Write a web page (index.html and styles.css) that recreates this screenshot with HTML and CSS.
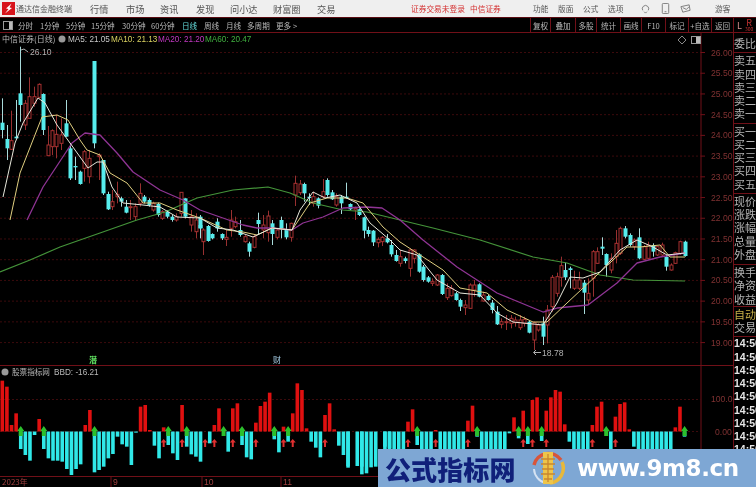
FILE: index.html
```html
<!DOCTYPE html>
<html lang="zh">
<head>
<meta charset="utf-8">
<title>通达信金融终端</title>
<link rel="stylesheet" href="styles.css">
</head>
<body>
<div class="app">
  <header class="titlebar">
    <svg class="app-logo" viewBox="0 0 13 13"><rect width="13" height="13" fill="#d8141c"/><path d="M9.5 1.5 L4 6.5 L6.5 7 L3 11.5 L10 6 L7.5 5.5 Z" fill="#fff"/></svg>
    <span class="app-name">通达信金融终端</span>
    <nav class="menu">
      <span>行情</span><span>市场</span><span>资讯</span><span>发现</span><span>问小达</span><span>财富圈</span><span>交易</span>
    </nav>
    <span class="login">证券交易未登录</span>
    <span class="broker">中信证券</span>
    <nav class="tools">
      <span>功能</span><span>版面</span><span>公式</span><span>选项</span>
    </nav>
    <div class="head-icons">
      <svg viewBox="0 0 12 12"><path d="M3 8 A3.5 3.5 0 1 1 9 8 M4.5 9.5 L6 11 L7.5 9.5" fill="none" stroke="#777"/></svg>
      <svg viewBox="0 0 12 12"><rect x="2.5" y="0.5" width="7" height="11" rx="1" fill="none" stroke="#777"/><path d="M5 9.5 H7" stroke="#777"/></svg>
      <svg viewBox="0 0 12 12"><path d="M1 4 L10 2 L11 8 L3 10 Z M3 5 L7 7 L10 4" fill="none" stroke="#777"/></svg>
    </div>
    <span class="guest">游客</span>
  </header>
  <div class="toolbar">
    <div class="periods">
      <svg class="panel-icon" viewBox="0 0 10 9"><rect x="0.5" y="0.5" width="9" height="8" fill="none" stroke="#999"/><rect x="6" y="1" width="3" height="7" fill="#bbb"/></svg>
      <span class="p w15">分时</span><span class="p w26">1分钟</span><span class="p w25">5分钟</span><span class="p w31">15分钟</span><span class="p w29">30分钟</span><span class="p w31">60分钟</span><span class="p w22 active">日线</span><span class="p w22">周线</span><span class="p w21">月线</span><span class="p w29">多周期</span><span class="p w22">更多 &gt;</span>
    </div>
    <div class="actions">
      <span class="btn w20">复权</span><span class="btn w25">叠加</span><span class="btn w21">多股</span><span class="btn w24">统计</span><span class="btn w21">画线</span><span class="btn w24">F10</span><span class="btn w23">标记</span><span class="btn w23">+自选</span><span class="btn w22">返回</span>
    </div>
    <div class="lr"><b>L</b><i>R<small>300</small></i></div>
  </div>
  <div class="main">
    <svg id="chart" class="chart" viewBox="0 33 733 454" width="733" height="454"></svg>
    <aside class="quote">
      <div class="group"><div>委比</div></div>
      <div class="group"><div>卖五</div><div>卖四</div><div>卖三</div><div>卖二</div><div>卖一</div></div>
      <div class="group"><div>买一</div><div>买二</div><div>买三</div><div>买四</div><div>买五</div></div>
      <div class="group wide"><div>现价</div><div>涨跌</div><div>涨幅</div><div>总量</div><div>外盘</div></div>
      <div class="group tight"><div>换手</div><div>净资</div><div>收益</div></div>
      <div class="group"><div class="auto">自动</div><div>交易</div></div>
      <div class="times"><div>14:50</div><div>14:50</div><div>14:50</div><div>14:50</div><div>14:50</div><div>14:50</div><div>14:50</div><div>14:50</div><div>14:50</div><div>14:50</div></div>
    </aside>
  </div>
  <div class="watermark">
    <span class="wm-name">公式指标网</span>
    <svg class="wm-logo" viewBox="0 0 38 38">
      <path d="M5 16 A15 15 0 0 1 32 11" fill="none" stroke="#d8553a" stroke-width="3.5"/>
      <path d="M33 13 A15 15 0 0 1 21 34" fill="none" stroke="#e8b83a" stroke-width="3.5"/>
      <path d="M17 34 A15 15 0 0 1 5 20" fill="none" stroke="#d5e2f2" stroke-width="2"/>
      <rect x="14" y="3" width="10" height="32" fill="#eec54a"/>
      <path d="M12 10 H26 M12 15 H26 M13 20 H25 M12 25 H26 M15 30 H23 M19 5 V33" stroke="#c9862f" stroke-width="1.3"/>
    </svg>
    <span class="wm-url">www.9m8.cn</span>
  </div>
</div>
<script src="chart.js"></script>
</body>
</html>
```
FILE: styles.css
```css
* { box-sizing: border-box; }
html, body { margin: 0; padding: 0; background: #000; }
.app {
  position: relative;
  width: 756px;
  height: 487px;
  overflow: hidden;
  display: flex;
  flex-direction: column;
  background: #000;
  font-family: "Noto Sans CJK SC", "Liberation Sans", sans-serif;
  filter: blur(0.3px);
}
.titlebar {
  height: 17px;
  flex: none;
  display: flex;
  align-items: center;
  background: #efefef;
  padding-left: 2px;
  color: #555;
  font-size: 9.2px;
}
.app-logo { width: 13px; height: 13px; flex: none; }
.app-name { margin-left: 1px; width: 57px; font-size: 8px; white-space: nowrap; }
.menu { display: flex; margin-left: 17px; width: 321px; }
.menu span:nth-child(1) { width: 36px; }
.menu span:nth-child(2) { width: 34px; }
.menu span:nth-child(3) { width: 36px; }
.menu span:nth-child(4) { width: 34px; }
.menu span:nth-child(5) { width: 43px; }
.menu span:nth-child(6) { width: 44px; }
.login { color: #d43030; width: 59px; white-space: nowrap; font-size: 7.7px; }
.broker { color: #d43030; width: 63px; white-space: nowrap; font-size: 7.7px; }
.tools { display: flex; width: 107px; font-size: 7.7px; }
.tools span { width: 25px; }
.head-icons { display: flex; gap: 9px; width: 75px; }
.head-icons svg { width: 11px; height: 11px; }
.guest { font-size: 7.7px; white-space: nowrap; }

.toolbar {
  height: 16px;
  flex: none;
  display: flex;
  align-items: stretch;
  background: #000;
  border-top: 1px solid #5a0c12;
  border-bottom: 1px solid #701018;
  color: #b8b8b8;
  font-size: 7.6px;
  white-space: nowrap;
}
.periods { display: flex; align-items: center; padding-left: 3px; width: 530px; }
.panel-icon { width: 10px; height: 9px; margin-right: 5px; flex: none; }
.p { display: block; flex: none; }
.active { color: #62d8d8; }
.w15 { width: 22px; }
.w26 { width: 26px; }
.w25 { width: 25px; }
.w31 { width: 31px; }
.w29 { width: 29px; }
.w22 { width: 22px; }
.w21 { width: 21px; }
.w20 { width: 20px; }
.w24 { width: 24px; }
.w23 { width: 23px; }
.actions { display: flex; width: 203px; }
.btn {
  display: flex;
  align-items: center;
  justify-content: center;
  border-left: 1px solid #701018;
  flex: none;
}
.lr {
  width: 23px;
  flex: none;
  display: flex;
  gap: 3px;
  padding-left: 3px;
  align-items: center;
  border-left: 1px solid #701018;
  color: #c03030;
  font-size: 9px;
}
.lr b { font-weight: normal; color: #d89090; }
.lr i { font-style: normal; display: flex; flex-direction: column; line-height: 6px; align-items: center; }
.lr small { font-size: 5px; line-height: 5px; }

.main { flex: 1; display: flex; min-height: 0; }
.chart { display: block; flex: none; background: #000; }
.quote {
  width: 23px;
  flex: none;
  overflow: hidden;
  color: #b4b4b4;
  font-size: 11px;
  line-height: 13.25px;
  white-space: nowrap;
  border-left: 1px solid #701018;
  padding-top: 3px;
}
.group { border-bottom: 1px solid #701018; padding: 1px 0 2px; }
.group.wide { padding-bottom: 3px; }
.group.tight { padding-bottom: 0; }
.auto { color: #c8b048; }
.times { color: #e6e6e6; font-family: "Liberation Sans", sans-serif; font-size: 10.5px; font-weight: bold; }

.watermark {
  position: absolute;
  right: 0;
  bottom: 0;
  width: 378px;
  height: 38px;
  background: #7ea7d4;
  display: flex;
  align-items: center;
  white-space: nowrap;
}
.wm-name { margin-left: 7px; width: 144px; color: #10207a; font-size: 26px; font-weight: 900; letter-spacing: 0.1px; flex: none; }
.wm-logo { width: 38px; height: 38px; flex: none; }
.wm-url { margin-left: 10px; color: #fff; font-family: "DejaVu Sans", sans-serif; font-weight: bold; font-size: 23px; letter-spacing: -0.4px; }

.ax { fill: #803232; font-family: "Liberation Sans", sans-serif; font-size: 8.6px; }
.lbl { font-family: "Liberation Sans", sans-serif; font-size: 8.2px; }
.date { font-family: "Liberation Sans", sans-serif; font-size: 8.6px; }
.cjk { font-family: "Noto Sans CJK SC", sans-serif; font-size: 8px; }
.cjk-small { font-family: "Noto Sans CJK SC", sans-serif; font-size: 7.6px; }
.mark { fill: #b0b0b0; font-family: "Liberation Sans", sans-serif; font-size: 8.6px; }
.flag-bold { font-weight: bold; }
```
FILE: chart.js
```js
(function () {
  var NS = 'http://www.w3.org/2000/svg';
  var svg = document.getElementById('chart');
  function el(name, attrs, text) {
    var e = document.createElementNS(NS, name);
    for (var k in attrs) e.setAttribute(k, attrs[k]);
    if (text != null) e.textContent = text;
    svg.appendChild(e);
    return e;
  }
  var RED = '#a83030', CY = '#56ecec', GRID = '#3c0a0c', LINE = '#701018';
  var STEP = 4.61, START = 2.3;
  function snap(x) { return START + STEP * Math.round((x - START) / STEP); }

  // grid + price axis
  var prices = ['26.00','25.50','25.00','24.50','24.00','23.50','23.00','22.50','22.00','21.50','21.00','20.50','20.00','19.50','19.00'];
  prices.forEach(function (p, i) {
    var y = 52.5 + i * 20.72;
    el('line', {x1: 0, x2: 701, y1: y, y2: y, stroke: GRID, 'stroke-dasharray': '2 2'});
    el('line', {x1: 701, x2: 705, y1: y, y2: y, stroke: LINE});
    el('text', {x: 711, y: y + 3, 'class': 'ax'}, p);
  });
  el('line', {x1: 701, x2: 701, y1: 33, y2: 487, stroke: LINE});
  el('line', {x1: 0, x2: 733, y1: 365.5, y2: 365.5, stroke: LINE});
  el('line', {x1: 0, x2: 701, y1: 476.5, y2: 476.5, stroke: LINE});
  el('line', {x1: 0, x2: 701, y1: 399.5, y2: 399.5, stroke: GRID, 'stroke-dasharray': '2 2'});
  el('line', {x1: 0, x2: 701, y1: 431.5, y2: 431.5, stroke: GRID, 'stroke-dasharray': '2 2'});
  el('text', {x: 711, y: 402, 'class': 'ax'}, '100.0');
  el('text', {x: 715, y: 435, 'class': 'ax'}, '0.00');

  // candles: [x, type(0 red,1 cyan), wickTop, bodyTop, bodyBottom, wickBottom] in zoom-crop units
  function candles(ox, oy, list) {
    list.forEach(function (c) {
      var x = Math.round(ox + c[0] / 3 - 0.5) + 0.5;
      var up = c[1] === 0;
      var wt = oy + c[2] / 3, bt = oy + c[3] / 3, bb = oy + c[4] / 3, wb = oy + c[5] / 3;
      el('line', {x1: x, x2: x, y1: wt, y2: wb, stroke: up ? '#983030' : '#a8dada'});
      var h = Math.max(bb - bt, 1);
      if (up) el('rect', {x: x - 1.5, y: bt, width: 3, height: h, fill: '#000', stroke: RED});
      else el('rect', {x: x - 2, y: bt, width: 4, height: h, fill: CY});
    });
  }
  candles(0, 40, [
    [7,1,175,248,270,295],[21,1,255,297,325,360],[35,0,212,302,328,330],[49,1,180,290,295,295],[62,1,20,160,195,245],
    [75,0,180,190,255,270],[89,0,112,170,235,235],[103,0,140,170,190,200],[117,0,130,133,172,175],[131,1,160,162,270,285],
    [145,0,258,315,347,347],[157,0,268,272,320,345],[170,0,225,283,320,355],[185,0,235,285,310,330],[198,1,180,250,290,290],
    [212,1,310,325,415,420],[226,1,350,378,382,420],[240,1,392,395,432,434],[253,0,330,335,385,425],[268,0,330,355,410,430],
    [282,1,63,63,310,325],[297,0,340,345,350,420],[310,1,360,360,460,465],[324,1,455,462,508,510],[338,0,450,485,500,510],
    [352,0,425,463,470,490],[365,1,470,475,485,500],[378,1,480,500,518,520],[392,0,480,500,503,540],[406,0,490,500,530,540],
    [420,0,430,460,490,500],[433,1,465,470,485,490],[447,1,475,480,495,500],[461,0,485,490,510,515],[474,1,488,492,525,530],
    [488,0,510,515,535,540],[502,1,510,515,530,535],[516,1,525,530,540,545],[530,0,520,530,540,545],[543,0,457,457,520,530],[557,1,475,475,530,535]
  ]);
  candles(186, 160, [[15,0,150,170,195,215],[30,0,160,180,215,235],[42,1,180,195,205,235]]);
  candles(200, 160, [
    [0,1,165,170,205,215],[10,0,205,210,245,285],[24,1,195,198,243,245],[38,1,220,222,235,238],[52,1,175,185,205,215],[66,1,220,222,235,240],
    [80,0,210,232,238,258],[93,0,150,180,205,230],[107,0,170,185,200,205],[121,1,180,210,225,230],[135,0,225,230,245,248],
    [148,1,245,250,275,290],[162,0,222,230,262,265],[176,1,158,180,192,225],[190,0,165,195,210,235],[204,0,152,168,218,245],
    [218,1,180,190,222,255],[232,0,205,210,232,238],[245,1,170,180,205,235],[259,1,190,207,232,238],[273,0,188,190,232,245],
    [287,0,47,70,105,138],[300,0,60,72,98,105],[314,1,68,72,100,125],[328,1,100,110,114,135],[341,0,95,110,130,140],
    [355,1,112,115,137,145],[369,0,57,95,110,115],[383,1,55,60,105,110],[396,1,90,97,118,120],[410,0,100,110,135,140],
    [424,1,105,110,130,162],[438,1,68,110,114,115],[451,1,130,132,148,150],[465,0,140,145,150,180],[479,1,145,148,165,168],
    [492,1,170,172,212,235],[506,1,200,210,222,230],[520,1,210,212,247,258],[534,0,232,238,248,262],[548,0,228,232,245,258],
    [561,1,222,235,247,250],[575,1,240,255,283,290],[589,1,270,285,303,305]
  ]);
  candles(400, 200, [
    [0,0,150,170,190,200],[15,1,170,175,183,190],[30,0,145,150,205,230],[42,0,148,150,175,190],[57,1,160,163,215,218],
    [70,1,195,200,240,245],[84,1,228,232,245,248],[98,0,235,245,250,258],[112,0,222,225,255,258],[127,1,222,225,282,285],
    [141,0,250,265,293,300],[155,0,255,265,287,290],[168,1,276,280,300,302],[182,1,296,300,320,333],[196,0,300,315,323,345],
    [210,0,250,255,325,325],[223,0,240,255,270,290],[237,1,250,253,290,292],[251,0,275,285,303,305],[265,1,284,288,300,302],
    [278,1,300,308,330,340],[292,1,318,335,373,375],[305,0,355,365,373,385],[319,0,345,365,368,390],[333,0,345,355,370,385],
    [347,0,350,360,368,380],[360,0,345,360,383,390],[374,0,350,358,370,380],[388,1,362,365,398,400],[402,0,365,368,420,450],
    [416,0,370,375,390,395],[430,1,350,370,410,435],[443,0,315,330,375,430],[457,0,225,232,320,335],[471,0,218,230,280,290],
    [484,0,170,197,232,260],[497,1,188,210,232,240],[511,1,200,205,210,265],[524,0,212,240,265,270],[538,0,215,240,265,270],
    [552,1,240,248,278,342],[566,0,235,280,300,315],[580,0,150,155,235,290],[593,0,142,155,190,192],[606,1,112,140,146,165],
    [620,1,160,162,195,230],[634,0,160,175,210,220],[648,0,90,130,170,190],[662,0,80,85,160,165],[676,1,78,85,110,115],
    [690,1,100,105,135,140],[704,0,115,120,140,150],[718,1,85,112,175,178],[732,0,135,140,178,180],[745,0,125,135,175,178],
    [759,1,130,135,155,170],[773,0,138,140,165,168],[786,0,128,135,165,170],[800,1,165,170,200,212],[813,0,190,195,210,212],
    [827,0,155,158,190,192],[841,0,122,125,160,165],[855,1,122,125,168,170]
  ]);

  // moving averages, page coordinates
  function ma(pts, col, w) {
    el('polyline', {points: pts, fill: 'none', stroke: col, 'stroke-width': w, 'stroke-linejoin': 'round'});
  }
  ma('0,272 30,260 60,247 100,233 137,220 165,212 197,198 233,190 268,187 290,193 313,203 343,210 367,212 400,220 433,228 480,240 533,257 567,263 600,275 633,280 685,281', '#44943a', 1.2);
  ma('27,220 43,187 72,143 85,133 100,135 117,153 133,172 160,190 183,200 200,210 220,217 243,225 257,228 272,228 292,230 303,223 323,217 343,208 367,207 382,208 400,220 423,240 457,267 497,293 543,312 557,308 588,305 617,283 637,263 660,257 685,253', '#8f3494', 1.3);
  ma('10,220 20,173 42,117 57,115 68,120 80,140 87,150 100,155 110,173 127,183 143,203 160,203 177,210 200,218 227,230 243,232 257,235 272,228 292,230 310,203 327,198 347,198 363,203 383,227 400,242 420,255 443,270 460,288 487,293 507,310 533,322 547,322 567,303 597,275 627,247 640,247 660,245 670,257 685,257', '#e0cf80', 1);
  ma('3,197 15,143 23,123 38,98 45,103 57,125 70,143 88,168 97,162 103,162 112,187 123,203 143,205 160,207 177,217 200,218 217,228 233,230 253,237 272,228 292,230 300,210 313,192 325,198 340,195 357,203 370,223 390,240 400,250 417,255 437,280 460,293 480,295 497,313 513,322 543,325 557,303 570,277 583,278 600,272 620,250 637,240 653,247 667,255 685,253', '#e8e8dc', 1);

  // extreme-price marks
  el('polyline', {points: '28,52 24,49 21,50', fill: 'none', stroke: '#b0b0b0'});
  el('text', {x: 30, y: 55, 'class': 'mark'}, '26.10');
  el('path', {d: 'M534 352.5 H541 M536 350 L533.5 352.5 L536 355', fill: 'none', stroke: '#b0b0b0'});
  el('text', {x: 542, y: 356, 'class': 'mark'}, '18.78');

  // header of main chart
  el('text', {x: 2, y: 42, 'class': 'cjk', fill: '#b8b8b8'}, '中信证券(日线)');
  el('circle', {cx: 62, cy: 39, r: 3.5, fill: '#999'});
  [[68,'MA5: 21.05','#c8c8c8'],[111,'MA10: 21.13','#d8d060'],[158,'MA20: 21.20','#c038c0'],[205,'MA60: 20.47','#40b040']].forEach(function (t) {
    el('text', {x: t[0], y: 42, 'class': 'lbl', fill: t[2]}, t[1]);
  });
  el('path', {d: 'M682 36 L686 40 L682 44 L678 40 Z', fill: 'none', stroke: '#888'});
  el('rect', {x: 691.5, y: 36.5, width: 9, height: 7, fill: 'none', stroke: '#999'});
  el('rect', {x: 696, y: 37, width: 4, height: 6, fill: '#bbb'});

  // event flags
  el('text', {x: 89, y: 363, 'class': 'cjk flag-bold', fill: '#60e060'}, '潜');
  el('text', {x: 273, y: 363, 'class': 'cjk', fill: '#a8d0e8'}, '财');

  // indicator header
  el('circle', {cx: 5, cy: 372, r: 3.5, fill: '#999'});
  el('text', {x: 12, y: 375, 'class': 'cjk-small', fill: '#b8b8b8'}, '股票指标网');
  el('text', {x: 54, y: 375, 'class': 'lbl', fill: '#b8b8b8'}, 'BBD: -16.21');

  // indicator bars: [x, end of bar] in zoom-crop units
  var BASE = 431.5;
  function bars(ox, oy, list) {
    list.forEach(function (b) {
      var x = snap(ox + b[0] / 3);
      var y = oy + b[1] / 3;
      var t = Math.min(y, BASE), hh = Math.abs(y - BASE);
      el('rect', {x: x - 1.8, y: t, width: 3.6, height: hh, fill: y < BASE ? '#e01010' : '#30e8e8'});
    });
  }
  bars(0, 350, [[7,92],[21,110],[35,225],[48,190],[62,297],[76,315],[90,332],[104,255],[117,207],[131,297],[145,325],[159,332],[172,332],[186,335],[200,357],[213,375],[227,357],[241,343],[255,225],[269,180],[283,367],[297,360],[311,350],[325,325],[338,312],[352,260],[366,283],[380,290],[393,345],[407,248],[420,170],[434,165],[448,240],[462,287],[476,325],[490,232],[503,285],[517,310],[531,330],[544,165],[558,290],[572,313],[586,320]]);
  bars(200, 350, [[0,335],[26,280],[40,225],[52,175],[80,305],[93,175],[107,160],[121,285],[135,322],[149,328],[162,218],[176,168],[190,155],[204,128],[218,268],[232,307],[246,230],[260,275],[273,190],[287,100],[300,120],[315,235],[328,275],[342,293],[355,322],[369,195],[383,160],[396,238],[410,287],[424,315],[438,353],[451,348],[465,348],[479,350],[492,373],[506,370],[520,352],[534,350],[561,290],[575,295]]);
  bars(380, 370, [[21,300],[35,300],[48,300],[62,300],[76,300],[90,155],[103,118],[117,225],[131,300],[145,300],[159,300],[172,180],[186,300],[200,300],[214,300],[228,300],[241,300],[255,300],[269,152],[283,107],[297,200],[310,300],[324,300],[338,300],[352,300],[366,300],[380,300],[393,190],[406,142],[420,205],[434,122],[448,222],[461,90],[475,82],[489,213],[503,122],[516,82],[530,60],[544,65],[558,163],[572,215],[586,300],[600,300],[614,300],[628,300],[641,165],[655,110],[668,95],[696,300],[710,140],[724,102],[738,97],[752,178],[765,230],[779,300],[793,300],[807,300],[821,300],[834,300],[848,300],[862,300],[876,300],[889,172],[903,110],[915,200]]);

  function greenArrow(x) {
    el('path', {d: 'M' + x + ' 426 L' + (x + 3.5) + ' 431 H' + (x + 2) + ' V436 H' + (x - 2) + ' V431 H' + (x - 3.5) + ' Z', fill: '#2cc02c'});
  }
  function redArrow(x) {
    el('path', {d: 'M' + x + ' 439 L' + (x + 3) + ' 442.5 H' + (x + 1) + ' V447 H' + (x - 1) + ' V442.5 H' + (x - 3) + ' Z', fill: '#e03030'});
  }
  [63/3,131/3,283/3,503/3,558/3,200+66/3,200+121/3,200+218/3,200+260/3,380+117/3,380+297/3,380+420/3,380+448/3,380+489/3,380+680/3,380+915/3].forEach(function (x) { greenArrow(snap(x)); });
  [490/3,544/3,200+12/3,200+40/3,200+93/3,200+162/3,200+246/3,200+273/3,200+369/3,380+90/3,380+172/3,380+269/3,380+434/3,380+461/3,380+503/3,380+641/3,380+710/3].forEach(function (x) { redArrow(snap(x)); });

  // date axis
  el('text', {x: 2, y: 485, 'class': 'cjk', fill: '#a04040'}, '2023年');
  [[113,'9'],[204,'10'],[283,'11']].forEach(function (d) {
    el('text', {x: d[0], y: 485, 'class': 'date', fill: '#a04040'}, d[1]);
    el('line', {x1: d[0] - 2, x2: d[0] - 2, y1: 476, y2: 487, stroke: LINE});
  });
})();
```
